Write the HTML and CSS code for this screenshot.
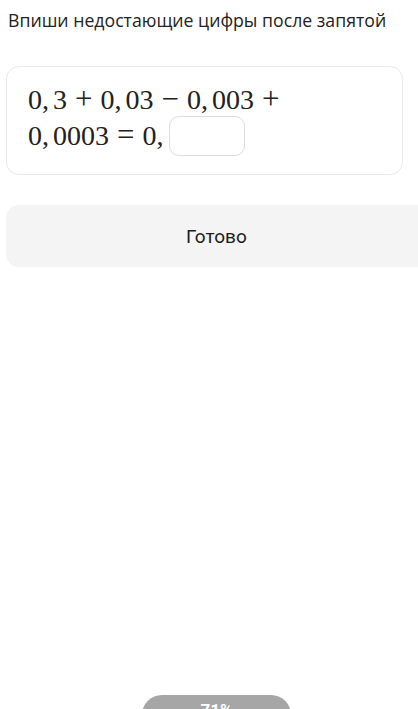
FILE: index.html
```html
<!DOCTYPE html>
<html lang="ru">
<head>
    <meta charset="UTF-8">
    <meta name="viewport" content="width=device-width, initial-scale=1.0">
    <title>Задание</title>
    <link rel="stylesheet" href="styles.css">
</head>
<body>
<div class="page">
    <h1 class="task-title">Впиши недостающие цифры после запятой</h1>

    <div class="task-card">
        <div class="math">
            <div class="math-line">0,<span class="thin"></span>3 <span class="op">+</span> 0,<span class="thin"></span>03 <span class="op">−</span> 0,<span class="thin"></span>003 <span class="op">+</span></div>
            <div class="math-line">0,<span class="thin"></span>0003 <span class="op">=</span> 0,<span class="thin"></span><input class="answer" type="text" aria-label="Ответ"></div>
        </div>
    </div>

    <button class="done-btn">Готово</button>
</div>

<div class="zoom-pill">71%</div>
</body>
</html>
```

FILE: styles.css
```css
html, body {
    margin: 0;
    padding: 0;
    background-color: #fff;
    overflow: hidden;
    height: 100%;
}

.page {
    width: 440px;
    padding-top: 9px;
}

.task-title {
    margin: 0 0 0 8px;
    font-family: 'Open Sans', sans-serif;
    font-weight: 400;
    font-size: 17.7px;
    line-height: 22px;
    color: #222;
}

.task-card {
    width: 397px;
    box-sizing: border-box;
    margin: 35px 0 0 6px;
    padding: 14px 20px 21px 21px;
    border: 1px solid #e9e9e9;
    border-radius: 13px;
    background-color: #fff;
}

.math {
    font-family: 'Liberation Serif', 'DejaVu Serif', serif;
    font-size: 28px;
    color: #222;
}

.math-line {
    height: 36px;
    line-height: 36px;
    white-space: nowrap;
}

.thin {
    display: inline-block;
    width: 4px;
}

.op {
    font-size: 31px;
    margin: 0 1px;
}

.answer {
    width: 76px;
    height: 40px;
    box-sizing: border-box;
    vertical-align: middle;
    margin-left: 2px;
    margin-top: -6px;
    border: 1.5px solid #dcdcdc;
    border-radius: 10px;
    background: #fff;
    outline: none;
}

.done-btn {
    display: block;
    width: 430px;
    height: 62px;
    margin: 30px 0 0 6px;
    border: none;
    border-radius: 13px;
    background-color: #f4f4f4;
    font-family: Roboto, sans-serif;
    font-size: 19px;
    color: #1c1c1c;
    text-align: left;
    padding-left: 180px;
}

/* всплывающий индикатор масштаба внизу */
.zoom-pill {
    position: absolute;
    left: 142px;
    top: 695px;
    width: 149px;
    height: 40px;
    border-radius: 20px;
    background-color: #a6a6a6;
    color: #fff;
    font-family: Roboto, sans-serif;
    font-weight: 700;
    font-size: 17px;
    line-height: 20px;
    padding-top: 5px;
    box-sizing: border-box;
    text-align: center;
}
```
